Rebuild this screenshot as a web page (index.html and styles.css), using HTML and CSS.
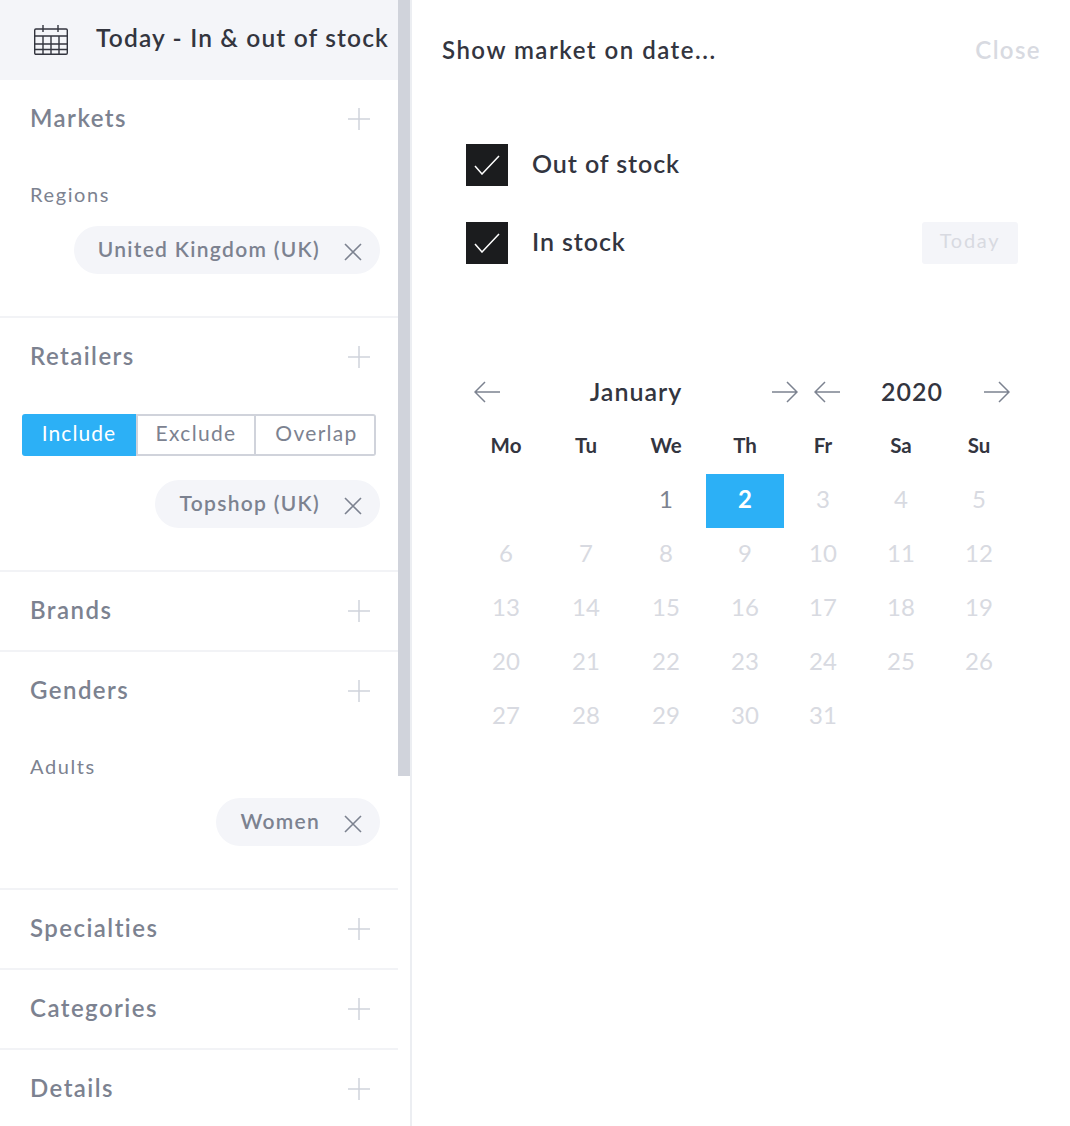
FILE: index.html
```html
<!DOCTYPE html>
<html lang="en">
<head>
<meta charset="utf-8">
<title>Market filters</title>
<link rel="stylesheet" href="styles.css">
</head>
<body>
<svg class="defs" width="0" height="0" aria-hidden="true">
  <defs>
    <symbol id="plus" viewBox="0 0 22 22"><path d="M11 0v22M0 11h22" fill="none" stroke="currentColor" stroke-width="1.5"/></symbol>
    <symbol id="cross" viewBox="0 0 18 18"><path d="M1 1l16 16M17 1L1 17" fill="none" stroke="currentColor" stroke-width="1.6"/></symbol>
    <symbol id="check" viewBox="0 0 26 20"><path d="M1 11l7 8L25 1" fill="none" stroke="currentColor" stroke-width="1.5"/></symbol>
    <symbol id="left" viewBox="0 0 26 22"><path d="M26 11H1M11 1L1 11l10 10" fill="none" stroke="currentColor" stroke-width="1.5"/></symbol>
    <symbol id="right" viewBox="0 0 26 22"><path d="M0 11h25M15 1l10 10-10 10" fill="none" stroke="currentColor" stroke-width="1.5"/></symbol>
  </defs>
</svg>
<div class="app">
  <aside class="sidebar">
    <div class="list">
      <header class="today">
        <svg class="cal" width="34" height="30" viewBox="0 0 34 30" fill="none" stroke="#33353f" stroke-width="1.4">
          <rect x=".7" y="4" width="32.6" height="25.3" rx="1.2"/>
          <path d="M9 0v7M24 0v7M.7 11h32.6M.7 19h32.6M.7 24.5h32.6M9 11v18M17 11v18M25 11v18"/>
        </svg>
        <span class="today-text">Today - In &amp; out of stock</span>
      </header>

      <section class="sec">
        <div class="head"><h2>Markets</h2><svg class="plus"><use href="#plus"/></svg></div>
        <div class="sub">Regions</div>
        <div class="chips"><span class="chip">United Kingdom (UK)<svg class="x"><use href="#cross"/></svg></span></div>
      </section>

      <section class="sec sec-ret">
        <div class="head"><h2>Retailers</h2><svg class="plus"><use href="#plus"/></svg></div>
        <div class="seg">
          <span class="seg-item on">Include</span>
          <span class="seg-item mid">Exclude</span>
          <span class="seg-item end">Overlap</span>
        </div>
        <div class="chips chips-ret"><span class="chip">Topshop (UK)<svg class="x"><use href="#cross"/></svg></span></div>
      </section>

      <section class="sec"><div class="head"><h2>Brands</h2><svg class="plus"><use href="#plus"/></svg></div></section>

      <section class="sec">
        <div class="head"><h2>Genders</h2><svg class="plus"><use href="#plus"/></svg></div>
        <div class="sub">Adults</div>
        <div class="chips"><span class="chip">Women<svg class="x"><use href="#cross"/></svg></span></div>
      </section>

      <section class="sec"><div class="head"><h2>Specialties</h2><svg class="plus"><use href="#plus"/></svg></div></section>
      <section class="sec"><div class="head"><h2>Categories</h2><svg class="plus"><use href="#plus"/></svg></div></section>
      <section class="sec"><div class="head"><h2>Details</h2><svg class="plus"><use href="#plus"/></svg></div></section>
    </div>
    <div class="thumb"></div>
  </aside>

  <main class="panel">
    <div class="panel-top">
      <h1>Show market on date...</h1>
      <span class="close">Close</span>
    </div>
    <div class="checks">
      <div class="check-row"><span class="box"><svg class="tick"><use href="#check"/></svg></span><span class="check-label">Out of stock</span></div>
      <div class="check-row"><span class="box"><svg class="tick"><use href="#check"/></svg></span><span class="check-label">In stock</span><button class="today-btn">Today</button></div>
    </div>
    <div class="cal-nav">
      <div class="nav nav-month"><svg class="arrow"><use href="#left"/></svg><span>January</span><svg class="arrow"><use href="#right"/></svg></div>
      <div class="nav nav-year"><svg class="arrow"><use href="#left"/></svg><span>2020</span><svg class="arrow"><use href="#right"/></svg></div>
    </div>
    <div class="grid">
      <b>Mo</b><b>Tu</b><b>We</b><b>Th</b><b>Fr</b><b>Sa</b><b>Su</b>
      <i></i><i></i><i class="avail">1</i><i class="sel">2</i><i>3</i><i>4</i><i>5</i>
      <i>6</i><i>7</i><i>8</i><i>9</i><i>10</i><i>11</i><i>12</i>
      <i>13</i><i>14</i><i>15</i><i>16</i><i>17</i><i>18</i><i>19</i>
      <i>20</i><i>21</i><i>22</i><i>23</i><i>24</i><i>25</i><i>26</i>
      <i>27</i><i>28</i><i>29</i><i>30</i><i>31</i>
    </div>
  </main>
</div>
</body>
</html>
```

FILE: styles.css
```css
* { box-sizing: border-box; }
html, body { margin: 0; height: 100%; }
body {
  overflow: hidden;
  background: #fff;
  color: #33353f;
  font-family: "Lato", "Liberation Sans", sans-serif;
}
.defs { position: absolute; }
.app { display: flex; height: 1126px; overflow: hidden; }

.sidebar {
  position: relative;
  flex: 0 0 412px;
  height: 1126px;
  overflow: hidden;
  border-right: 2px solid #eceef2;
}
.list { width: 398px; }
.thumb {
  position: absolute;
  top: 0;
  left: 398px;
  width: 12px;
  height: 776px;
  background: #d0d3db;
}

.today {
  display: flex;
  align-items: center;
  height: 80px;
  padding-left: 34px;
  background: #f4f5f9;
}
.today-text {
  margin: 0 0 6px 28px;
  font-size: 24.5px;
  font-weight: 600;
  letter-spacing: 1.15px;
  white-space: nowrap;
}

.sec { border-bottom: 2px solid #f2f3f6; }
.sec:last-child { border-bottom: 0; }
.head {
  display: flex;
  align-items: center;
  justify-content: space-between;
  height: 78px;
  padding: 0 28px 3px 30px;
}
.head h2 {
  margin: 0;
  color: #7c8290;
  font-size: 24px;
  font-weight: 600;
  letter-spacing: 1.45px;
}
.plus { width: 22px; height: 22px; margin-top: 3px; color: #d0d3db; }

.sub {
  height: 30px;
  margin-top: 21px;
  padding-left: 30px;
  color: #7c8290;
  font-size: 20px;
  line-height: 30px;
  letter-spacing: 1.6px;
}
.chips { display: flex; justify-content: flex-end; padding: 17px 18px 42px 0; }
.chips-ret { padding-top: 24px; }
.chip {
  display: inline-flex;
  align-items: center;
  height: 48px;
  padding: 0 18px 4px 24px;
  border-radius: 24px;
  background: #f4f5f9;
  color: #7c8290;
  font-size: 21px;
  font-weight: 600;
  letter-spacing: 1.3px;
  white-space: nowrap;
}
.x { width: 18px; height: 18px; margin: 7px 0 0 24px; color: #7c8290; }

.seg {
  display: flex;
  width: 354px;
  height: 42px;
  margin: 18px 0 0 22px;
}
.seg-item {
  display: flex;
  align-items: center;
  justify-content: center;
  width: 120px;
  padding-bottom: 5px;
  border: 2px solid #d0d3db;
  border-left: 0;
  color: #7c8290;
  font-size: 21px;
  letter-spacing: 1.3px;
}
.seg-item.on {
  width: 114px;
  border: 0;
  border-radius: 3px 0 0 3px;
  background: #2cb0f6;
  color: #fff;
  letter-spacing: 1.05px;
}
.seg-item.mid { border-left: 2px solid #d0d3db; }
.seg-item.end { padding-left: 3px; border-radius: 0 3px 3px 0; }

.panel { flex: 1; padding: 0 30px; }
.panel-top {
  display: flex;
  align-items: center;
  justify-content: space-between;
  height: 100px;
  padding-bottom: 2px;
}
.panel-top h1 {
  margin: 0;
  font-size: 24px;
  font-weight: 600;
  letter-spacing: 1.5px;
}
.close { margin-right: -1px; color: #d8dae1; font-size: 24px; font-weight: 600; letter-spacing: 1.4px; }

.checks { display: flex; flex-direction: column; gap: 36px; margin: 44px 22px 0 24px; }
.check-row { display: flex; align-items: center; height: 42px; }
.box {
  display: flex;
  align-items: center;
  justify-content: center;
  width: 42px;
  height: 42px;
  background: #1b1c1e;
  color: #fff;
}
.tick { width: 26px; height: 20px; }
.check-label { margin: 0 0 4px 24px; font-size: 25px; font-weight: 600; letter-spacing: .9px; }
.today-btn {
  width: 96px;
  height: 42px;
  margin-left: auto;
  padding: 0 0 6px;
  border: 0;
  border-radius: 3px;
  background: #f4f5f9;
  color: #d8dae1;
  font: 400 20px "Lato", sans-serif;
  letter-spacing: 1.7px;
}

.cal-nav { display: flex; margin: 106px 0 0 32px; }
.nav { display: flex; align-items: center; justify-content: space-between; height: 44px; color: #7c8290; }
.nav-month { width: 324px; }
.nav-year { width: 196px; margin-left: 16px; }
.nav span { margin-bottom: 2px; color: #33353f; font-size: 25px; font-weight: 600; letter-spacing: 1px; }
.arrow { width: 26px; height: 22px; }

.grid {
  display: grid;
  grid-template-columns: 80px 80px 80px 78px 78px 78px 78px;
  grid-template-rows: 60px;
  grid-auto-rows: 54px;
  margin: 0 0 0 24px;
}
.grid b {
  display: flex;
  align-items: center;
  justify-content: center;
  height: 34px;
  margin-top: 14px;
  font-size: 20.5px;
  font-weight: 700;
}
.grid i {
  display: flex;
  align-items: center;
  justify-content: center;
  padding-bottom: 5px;
  color: #d8dae1;
  font-size: 24px;
  font-style: normal;
}
.grid .avail { color: #7c8290; }
.grid .sel { background: #2cb0f6; color: #fff; font-weight: 700; }
```
